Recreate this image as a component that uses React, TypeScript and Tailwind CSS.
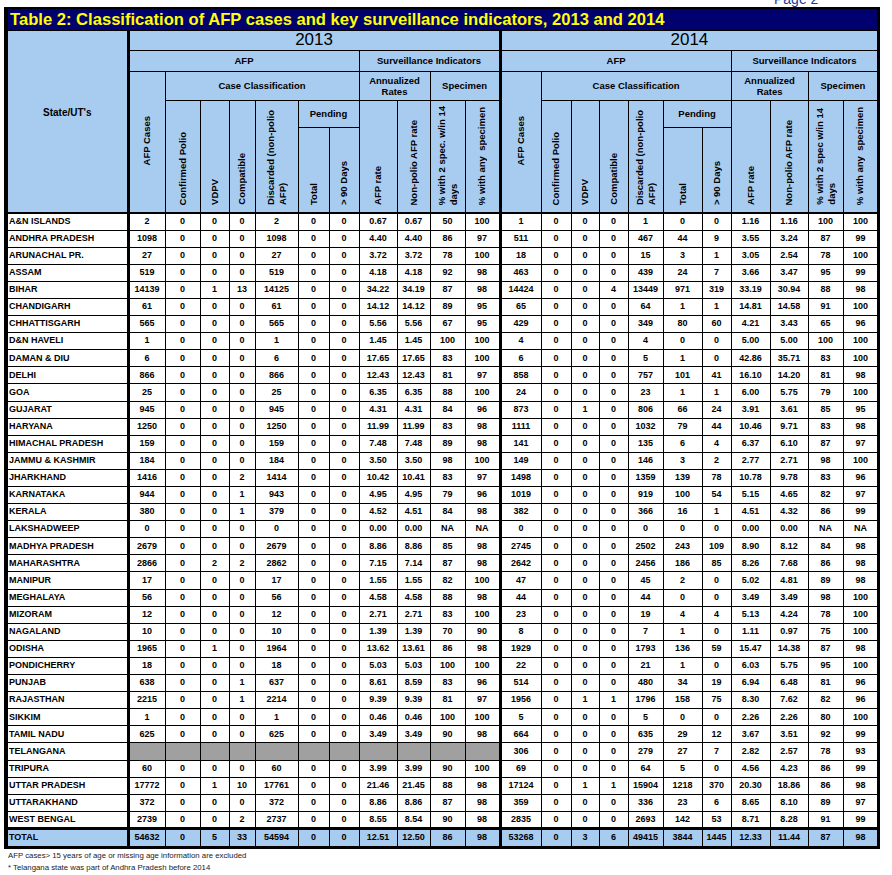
const rows: [string, string | null, string][] = [
  ["A&N ISLANDS", "2 0 0 0 2 0 0 0.67 0.67 50 100", "1 0 0 0 1 0 0 1.16 1.16 100 100"],
  ["ANDHRA PRADESH", "1098 0 0 0 1098 0 0 4.40 4.40 86 97", "511 0 0 0 467 44 9 3.55 3.24 87 99"],
  ["ARUNACHAL PR.", "27 0 0 0 27 0 0 3.72 3.72 78 100", "18 0 0 0 15 3 1 3.05 2.54 78 100"],
  ["ASSAM", "519 0 0 0 519 0 0 4.18 4.18 92 98", "463 0 0 0 439 24 7 3.66 3.47 95 99"],
  ["BIHAR", "14139 0 1 13 14125 0 0 34.22 34.19 87 98", "14424 0 0 4 13449 971 319 33.19 30.94 88 98"],
  ["CHANDIGARH", "61 0 0 0 61 0 0 14.12 14.12 89 95", "65 0 0 0 64 1 1 14.81 14.58 91 100"],
  ["CHHATTISGARH", "565 0 0 0 565 0 0 5.56 5.56 67 95", "429 0 0 0 349 80 60 4.21 3.43 65 96"],
  ["D&N HAVELI", "1 0 0 0 1 0 0 1.45 1.45 100 100", "4 0 0 0 4 0 0 5.00 5.00 100 100"],
  ["DAMAN & DIU", "6 0 0 0 6 0 0 17.65 17.65 83 100", "6 0 0 0 5 1 0 42.86 35.71 83 100"],
  ["DELHI", "866 0 0 0 866 0 0 12.43 12.43 81 97", "858 0 0 0 757 101 41 16.10 14.20 81 98"],
  ["GOA", "25 0 0 0 25 0 0 6.35 6.35 88 100", "24 0 0 0 23 1 1 6.00 5.75 79 100"],
  ["GUJARAT", "945 0 0 0 945 0 0 4.31 4.31 84 96", "873 0 1 0 806 66 24 3.91 3.61 85 95"],
  ["HARYANA", "1250 0 0 0 1250 0 0 11.99 11.99 83 98", "1111 0 0 0 1032 79 44 10.46 9.71 83 98"],
  ["HIMACHAL PRADESH", "159 0 0 0 159 0 0 7.48 7.48 89 98", "141 0 0 0 135 6 4 6.37 6.10 87 97"],
  ["JAMMU & KASHMIR", "184 0 0 0 184 0 0 3.50 3.50 98 100", "149 0 0 0 146 3 2 2.77 2.71 98 100"],
  ["JHARKHAND", "1416 0 0 2 1414 0 0 10.42 10.41 83 97", "1498 0 0 0 1359 139 78 10.78 9.78 83 96"],
  ["KARNATAKA", "944 0 0 1 943 0 0 4.95 4.95 79 96", "1019 0 0 0 919 100 54 5.15 4.65 82 97"],
  ["KERALA", "380 0 0 1 379 0 0 4.52 4.51 84 98", "382 0 0 0 366 16 1 4.51 4.32 86 99"],
  ["LAKSHADWEEP", "0 0 0 0 0 0 0 0.00 0.00 NA NA", "0 0 0 0 0 0 0 0.00 0.00 NA NA"],
  ["MADHYA PRADESH", "2679 0 0 0 2679 0 0 8.86 8.86 85 98", "2745 0 0 0 2502 243 109 8.90 8.12 84 98"],
  ["MAHARASHTRA", "2866 0 2 2 2862 0 0 7.15 7.14 87 98", "2642 0 0 0 2456 186 85 8.26 7.68 86 98"],
  ["MANIPUR", "17 0 0 0 17 0 0 1.55 1.55 82 100", "47 0 0 0 45 2 0 5.02 4.81 89 98"],
  ["MEGHALAYA", "56 0 0 0 56 0 0 4.58 4.58 88 98", "44 0 0 0 44 0 0 3.49 3.49 98 100"],
  ["MIZORAM", "12 0 0 0 12 0 0 2.71 2.71 83 100", "23 0 0 0 19 4 4 5.13 4.24 78 100"],
  ["NAGALAND", "10 0 0 0 10 0 0 1.39 1.39 70 90", "8 0 0 0 7 1 0 1.11 0.97 75 100"],
  ["ODISHA", "1965 0 1 0 1964 0 0 13.62 13.61 86 98", "1929 0 0 0 1793 136 59 15.47 14.38 87 98"],
  ["PONDICHERRY", "18 0 0 0 18 0 0 5.03 5.03 100 100", "22 0 0 0 21 1 0 6.03 5.75 95 100"],
  ["PUNJAB", "638 0 0 1 637 0 0 8.61 8.59 83 96", "514 0 0 0 480 34 19 6.94 6.48 81 96"],
  ["RAJASTHAN", "2215 0 0 1 2214 0 0 9.39 9.39 81 97", "1956 0 1 1 1796 158 75 8.30 7.62 82 96"],
  ["SIKKIM", "1 0 0 0 1 0 0 0.46 0.46 100 100", "5 0 0 0 5 0 0 2.26 2.26 80 100"],
  ["TAMIL NADU", "625 0 0 0 625 0 0 3.49 3.49 90 98", "664 0 0 0 635 29 12 3.67 3.51 92 99"],
  ["TELANGANA", null, "306 0 0 0 279 27 7 2.82 2.57 78 93"],
  ["TRIPURA", "60 0 0 0 60 0 0 3.99 3.99 90 100", "69 0 0 0 64 5 0 4.56 4.23 86 99"],
  ["UTTAR PRADESH", "17772 0 1 10 17761 0 0 21.46 21.45 88 98", "17124 0 1 1 15904 1218 370 20.30 18.86 86 98"],
  ["UTTARAKHAND", "372 0 0 0 372 0 0 8.86 8.86 87 98", "359 0 0 0 336 23 6 8.65 8.10 89 97"],
  ["WEST BENGAL", "2739 0 0 2 2737 0 0 8.55 8.54 90 98", "2835 0 0 0 2693 142 53 8.71 8.28 91 99"],
];

const total: [string, string] = [
  "54632 0 5 33 54594 0 0 12.51 12.50 86 98",
  "53268 0 3 6 49415 3844 1445 12.33 11.44 87 98",
];

const widths = [
  "w-[120px]",
  "w-[37px]", "w-[35px]", "w-[29px]", "w-[26px]", "w-[43px]", "w-[31px]", "w-[30px]", "w-[38px]", "w-[33px]", "w-[35px]", "w-[35px]",
  "w-[41px]", "w-[30px]", "w-[28px]", "w-[29px]", "w-[35px]", "w-[39px]", "w-[29px]", "w-[39px]", "w-[38px]", "w-[35px]", "w-[34px]",
];

const hd = "border border-black bg-[#a8ccf0] p-0 text-[9.5px] font-bold text-black leading-[11px]";
const vt = hd + " align-bottom text-center pb-[5px]";
const cell = "border border-black p-0 text-center text-[9px] font-bold text-black";

function V({ children }: { children: React.ReactNode }) {
  return (
    <div className="inline-block rotate-180 text-left leading-[12px] [writing-mode:vertical-rl]">
      {children}
    </div>
  );
}

function Cells({ data, thick, extra = "" }: { data: string | null; thick: boolean; extra?: string }) {
  if (!data) {
    return (
      <>
        {Array.from({ length: 11 }).map((_, i) => (
          <td key={i} className={`${cell} ${extra} bg-[#a0a0a0] ${thick && i === 10 ? "border-r-[3px]" : ""}`}></td>
        ))}
      </>
    );
  }
  return (
    <>
      {data.split(" ").map((v, i) => (
        <td key={i} className={`${cell} ${extra} ${thick && i === 10 ? "border-r-[3px]" : ""}`}>
          {v}
        </td>
      ))}
    </>
  );
}

function YearHead({ sep, spec }: { sep: boolean; spec: string }) {
  return { sep, spec };
}

export default function App() {
  YearHead({ sep: true, spec: "" });
  return (
    <div className="min-h-[875px] bg-white font-['Liberation_Sans',Arial,sans-serif]">
      <div className="h-[7px] overflow-hidden">
        <div className="-mt-[9px] pl-[774px] text-[14px] leading-[16px] text-[#23389a]">Page 2</div>
      </div>
      <div className="ml-[4px] w-[876px] border-t-2 border-r-[3px] border-b-[3px] border-l-4 border-black">
        <div className="h-[22px] border-b border-black bg-[#00006e] pl-[2px] text-[16.6px] font-bold leading-[21px] text-[#ffff00]">
          Table 2: Classification of AFP cases and key surveillance indicators, 2013 and 2014
        </div>
        <table className="w-[869px] table-fixed border-collapse border-hidden">
          <colgroup>
            {widths.map((w, i) => (
              <col key={i} className={w} />
            ))}
          </colgroup>
          <thead>
            <tr className="h-[19px]">
              <th rowSpan={5} className={`${hd} border-r-[3px] pb-[18px] text-center align-middle text-[10px]`}>
                State/UT's
              </th>
              <th colSpan={11} className={`${hd} border-r-[3px] text-center text-[17px] font-normal leading-[18px]`}>
                2013
              </th>
              <th colSpan={11} className={`${hd} text-center text-[17px] font-normal leading-[18px]`}>
                2014
              </th>
            </tr>
            <tr className="h-[21px]">
              <th colSpan={7} className={`${hd} text-center`}>AFP</th>
              <th colSpan={4} className={`${hd} border-r-[3px] text-center`}>Surveillance Indicators</th>
              <th colSpan={7} className={`${hd} text-center`}>AFP</th>
              <th colSpan={4} className={`${hd} text-center`}>Surveillance Indicators</th>
            </tr>
            <tr className="h-[29px]">
              <th rowSpan={3} className={`${hd} text-center align-middle`}>
                <V>AFP Cases</V>
              </th>
              <th colSpan={6} className={`${hd} text-center`}>Case Classification</th>
              <th colSpan={2} className={`${hd} text-center`}>
                Annualized
                <br />
                Rates
              </th>
              <th colSpan={2} className={`${hd} border-r-[3px] text-center`}>Specimen</th>
              <th rowSpan={3} className={`${hd} text-center align-middle`}>
                <V>AFP Cases</V>
              </th>
              <th colSpan={6} className={`${hd} text-center`}>Case Classification</th>
              <th colSpan={2} className={`${hd} text-center`}>
                Annualized
                <br />
                Rates
              </th>
              <th colSpan={2} className={`${hd} text-center`}>Specimen</th>
            </tr>
            <tr className="h-[27px]">
              <th rowSpan={2} className={vt}><V>Confirmed Polio</V></th>
              <th rowSpan={2} className={vt}><V>VDPV</V></th>
              <th rowSpan={2} className={vt}><V>Compatible</V></th>
              <th rowSpan={2} className={vt}>
                <V>
                  Discarded (non-polio
                  <br />
                  AFP)
                </V>
              </th>
              <th colSpan={2} className={`${hd} text-center`}>Pending</th>
              <th rowSpan={2} className={vt}><V>AFP rate</V></th>
              <th rowSpan={2} className={vt}><V>Non-polio AFP rate</V></th>
              <th rowSpan={2} className={vt}>
                <V>
                  % with 2 spec. w/in 14
                  <br />
                  days
                </V>
              </th>
              <th rowSpan={2} className={`${vt} border-r-[3px]`}><V>% with any&nbsp; specimen</V></th>
              <th rowSpan={2} className={vt}><V>Confirmed Polio</V></th>
              <th rowSpan={2} className={vt}><V>VDPV</V></th>
              <th rowSpan={2} className={vt}><V>Compatible</V></th>
              <th rowSpan={2} className={vt}>
                <V>
                  Discarded (non-polio
                  <br />
                  AFP)
                </V>
              </th>
              <th colSpan={2} className={`${hd} text-center`}>Pending</th>
              <th rowSpan={2} className={vt}><V>AFP rate</V></th>
              <th rowSpan={2} className={vt}><V>Non-polio AFP rate</V></th>
              <th rowSpan={2} className={vt}>
                <V>
                  % with 2 spec w/in 14
                  <br />
                  days
                </V>
              </th>
              <th rowSpan={2} className={vt}><V>% with any&nbsp; specimen</V></th>
            </tr>
            <tr className="h-[86px]">
              <th className={vt}><V>Total</V></th>
              <th className={vt}><V>&gt; 90 Days</V></th>
              <th className={vt}><V>Total</V></th>
              <th className={vt}><V>&gt; 90 Days</V></th>
            </tr>
          </thead>
          <tbody>
            {rows.map(([name, a, b], r) => {
              const top = r === 0 ? "border-t-2" : "";
              return (
                <tr key={name} className="h-[17.1px]">
                  <td className={`${cell} ${top} border-r-[3px] pl-[1px] text-left text-[9.5px]`}>{name}</td>
                  <Cells data={a} thick extra={top} />
                  <Cells data={b} thick={false} extra={top} />
                </tr>
              );
            })}
            <tr className="h-[18px] bg-[#a8ccf0]">
              <td className={`${cell} border-t-[3px] border-r-[3px] pl-[1px] text-left text-[9.5px]`}>TOTAL</td>
              <Cells data={total[0]} thick extra="border-t-[3px]" />
              <Cells data={total[1]} thick={false} extra="border-t-[3px]" />
            </tr>
          </tbody>
        </table>
      </div>
      <div className="pl-[8px] pt-[1px] text-[7.8px] leading-[12px] text-[#222]">
        <div>AFP cases&gt; 15 years of age or missing age information are excluded</div>
        <div>* Telangana state was part of Andhra Pradesh before 2014</div>
      </div>
    </div>
  );
}
